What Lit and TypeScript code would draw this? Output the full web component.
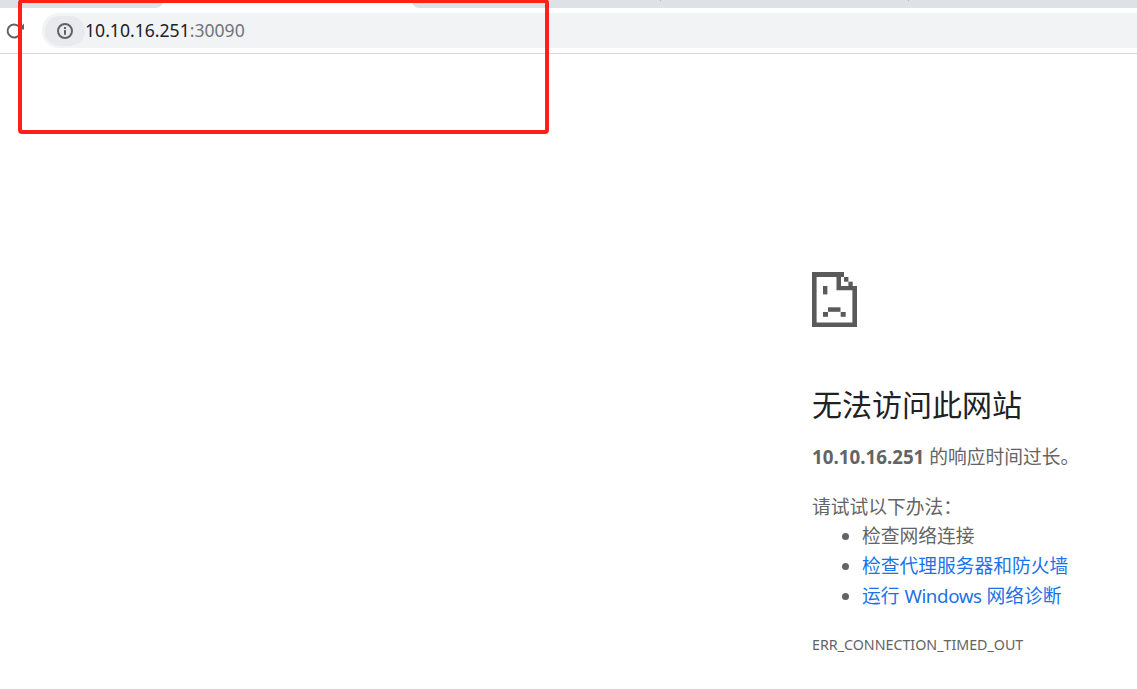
import { LitElement, html, css } from "lit";
import { customElement } from "lit/decorators.js";

@customElement("app-root")
export class AppRoot extends LitElement {
  static styles = css`
    :host {
      display: block;
      position: relative;
      height: 689px;
      overflow: hidden;
      background: #fff;
      font-family: "Noto Sans", "Noto Sans CJK SC", sans-serif;
    }
    .tabs { display: flex; height: 8px; background: #fff; }
    .tab-left { width: 163px; background: #dee1e6; border-bottom-right-radius: 7px; }
    .tab-active { width: 249px; }
    .tab-right { flex: 1; background: #dee1e6; border-bottom-left-radius: 7px; display: flex; }
    .tick { width: 1px; height: 1px; background: #b4b7bc; }
    .tick.a { margin-left: 248px; }
    .tick.b { margin-left: 247px; }
    .toolbar {
      height: 46px;
      box-sizing: border-box;
      padding: 5px 0 5px 6px;
      display: flex;
      align-items: stretch;
      border-bottom: 1px solid #d9d9de;
    }
    .reload { width: 18px; height: 18px; margin: 9px 18px 0 0; flex: none; overflow: visible; }
    .omnibox {
      flex: 1;
      display: flex;
      align-items: center;
      background: #f1f3f4;
      border-radius: 17px 0 0 17px;
      padding-left: 3px;
    }
    .chip {
      width: 40px;
      height: 30px;
      border-radius: 15px;
      background: #e8eaed;
      display: flex;
      align-items: center;
      justify-content: center;
    }
    .url { font-size: 17.6px; color: #202124; white-space: nowrap; padding-bottom: 2px; }
    .url span { color: #70757a; }
    main {
      padding: 218px 0 0 812px;
      color: #646464;
      font-size: 18.75px;
    }
    .sad { display: block; width: 45px; height: 55px; fill: #5a5a5a; }
    h1 {
      margin: 59px 0 0;
      font-size: 30px;
      font-weight: 400;
      line-height: 38px;
      color: #202124;
      white-space: nowrap;
    }
    p { margin: 0; line-height: 30px; white-space: nowrap; }
    .host-line { margin-top: 18px; }
    .try { margin-top: 20px; }
    ul { margin: -1px 0 0; padding-left: 50px; }
    li { line-height: 30px; white-space: nowrap; }
    a { color: #1a73e8; text-decoration: none; }
    .latin { letter-spacing: -0.4px; }
    .code { margin-top: 24px; font-size: 14.25px; line-height: 20px; white-space: nowrap; }
    .mark {
      position: absolute;
      left: 18px;
      top: -1px;
      width: 531px;
      height: 135px;
      box-sizing: border-box;
      border: 4px solid #ff2018;
      border-radius: 4px;
      pointer-events: none;
    }
  `;

  render() {
    return html`
      <div class="tabs">
        <div class="tab-left"></div>
        <div class="tab-active"></div>
        <div class="tab-right"><i class="tick a"></i><i class="tick b"></i></div>
      </div>
      <div class="toolbar">
        <svg class="reload" viewBox="0 0 18 18" fill="none">
          <path d="M13 4.700A6.500 6.500 0 1 0 14.300 11" stroke="#5f6368" stroke-width="2" />
          <path d="M18 1.500v6h-6z" fill="#5f6368" />
        </svg>
        <div class="omnibox">
          <div class="chip">
            <svg width="16" height="16" viewBox="0 0 16 16" fill="none">
              <circle cx="8" cy="8" r="7" stroke="#5f6368" stroke-width="2" />
              <rect x="7" y="7" width="2" height="4.800" fill="#5f6368" />
              <rect x="7" y="4" width="2" height="2" fill="#5f6368" />
            </svg>
          </div>
          <div class="url">10.10.16.251<span>:30090</span></div>
        </div>
      </div>
      <main>
        <svg class="sad" viewBox="0 0 45 55">
          <path d="M0 0h32v5H29v9h16v41H0zM4.600 5v45.400h35.800V18.300H24.500V5z" fill-rule="evenodd" />
          <rect x="32" y="5" width="4.400" height="4.700" />
          <rect x="36.400" y="9.700" width="4.300" height="4.400" />
          <rect x="11" y="14" width="4.400" height="8.400" />
          <rect x="16" y="35.300" width="12.500" height="4.500" />
          <rect x="11" y="40" width="5" height="4.800" />
          <rect x="28.700" y="40" width="5" height="4.800" />
        </svg>
        <h1>无法访问此网站</h1>
        <p class="host-line"><b>10.10.16.251</b> 的响应时间过长。</p>
        <p class="try">请试试以下办法：</p>
        <ul>
          <li>检查网络连接</li>
          <li><a href="#">检查代理服务器和防火墙</a></li>
          <li><a href="#">运行 <span class="latin">Windows</span> 网络诊断</a></li>
        </ul>
        <div class="code">ERR_CONNECTION_TIMED_OUT</div>
      </main>
      <div class="mark"></div>
    `;
  }
}
